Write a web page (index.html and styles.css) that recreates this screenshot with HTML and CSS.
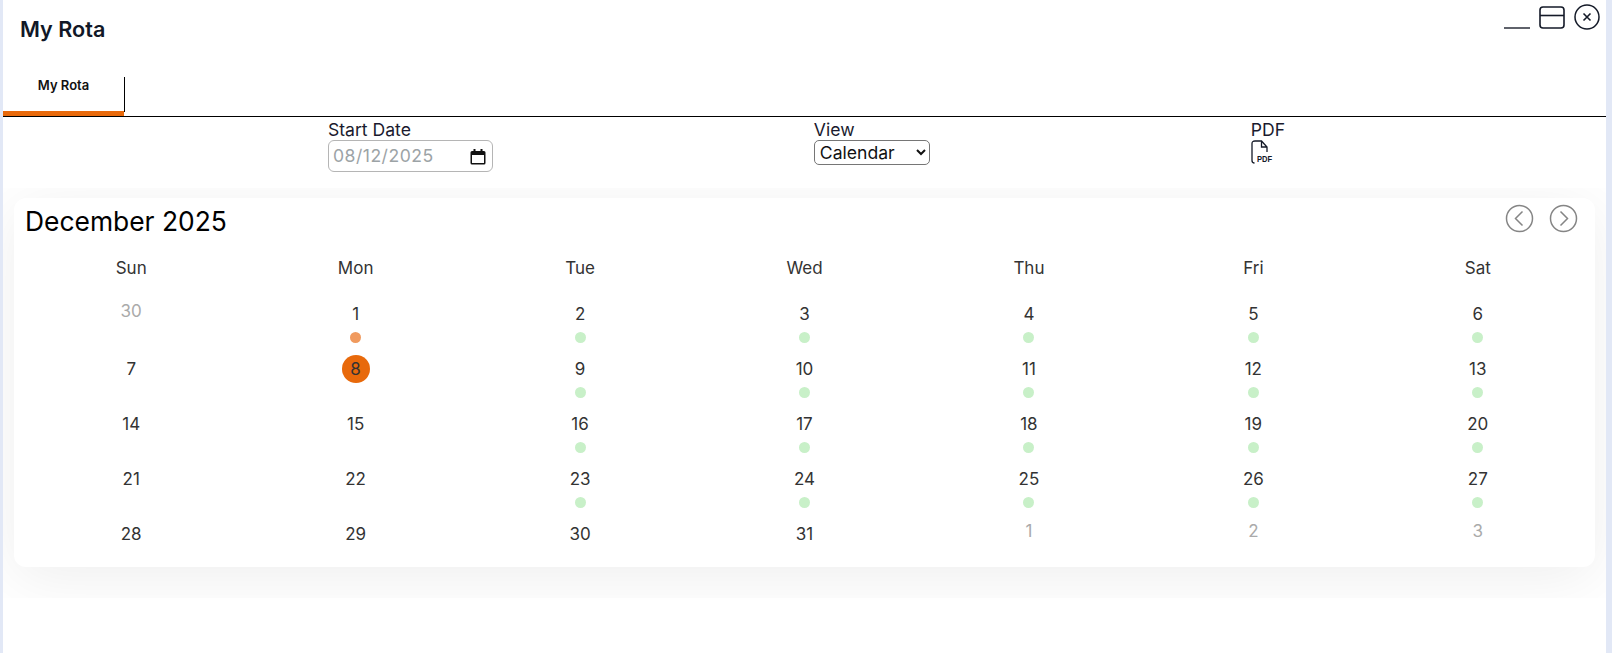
FILE: index.html
```html
<!DOCTYPE html>
<html lang="en">
<head>
<meta charset="utf-8">
<title>My Rota</title>
<link rel="stylesheet" href="styles.css">
</head>
<body>
<div class="window">
  <header class="titlebar">
    <h1 class="title">My Rota</h1>
    <div class="controls">
      <svg class="ctl-min" width="26" height="25" viewBox="0 0 26 25"><path d="M0 24h26" stroke="#2a2e3a" stroke-width="1.500"/></svg>
      <svg class="ctl-max" width="26" height="23" viewBox="0 0 26 23" fill="none" stroke="#141a28" stroke-width="1.6"><rect x="1" y="1" width="24" height="21" rx="3"/><path d="M1 9.500h24"/></svg>
      <svg class="ctl-close" width="26" height="26" viewBox="0 0 26 26" fill="none" stroke="#141a28"><circle cx="13" cy="13" r="12" stroke-width="1.500"/><path d="M9.500 9.500l7 7M16.500 9.500l-7 7" stroke-width="1.600"/></svg>
    </div>
  </header>
  <nav class="tabs">
    <div class="tab">My Rota</div>
    <div class="tab-sep"></div>
  </nav>
  <section class="filters">
    <div class="field">
      <span class="label">Start Date</span>
      <div class="date-input">
        <span class="date-value">08/12/2025</span>
        <svg width="16" height="17" viewBox="0 0 16 17"><path d="M2 3h12a1.500 1.500 0 0 1 1.500 1.500V15a1.500 1.500 0 0 1-1.500 1.500H2A1.500 1.500 0 0 1 .5 15V4.500A1.500 1.500 0 0 1 2 3zM2 7V15H14V7z" fill="#111" fill-rule="evenodd"/><path d="M3.500 1h2v3h-2zM10.500 1h2v3h-2z" fill="#111"/></svg>
      </div>
    </div>
    <div class="field">
      <span class="label">View</span>
      <select class="view-select"><option>Calendar</option></select>
    </div>
    <div class="field field-pdf">
      <span class="label">PDF</span>
      <div class="pdf-icon">
        <svg width="24" height="24" viewBox="0 0 24 24" fill="none" stroke="#141a28" stroke-width="1.300"><path d="M4 1h6.500l5.500 6v5M10.500 1v6h5.500M4 1Q1 1 1 3.500V20.500Q1 23 3.500 23"/></svg>
        <span class="pdf-text">PDF</span>
      </div>
    </div>
  </section>
  <div class="cal-clip">
    <section class="calendar">
      <div class="cal-head">
        <h2 class="month">December 2025</h2>
        <div class="cal-nav">
          <svg width="29" height="29" viewBox="0 0 29 29" fill="none" stroke="#858585" stroke-width="1.500"><circle cx="14.500" cy="14.500" r="13"/><path d="M17.500 7.500l-7 7 7 7"/></svg>
          <svg width="29" height="29" viewBox="0 0 29 29" fill="none" stroke="#858585" stroke-width="1.500"><circle cx="14.500" cy="14.500" r="13"/><path d="M11.500 7.500l7 7-7 7"/></svg>
        </div>
      </div>
      <div class="grid">
        <div class="dow">Sun</div><div class="dow">Mon</div><div class="dow">Tue</div><div class="dow">Wed</div><div class="dow">Thu</div><div class="dow">Fri</div><div class="dow">Sat</div>

        <div class="day other">30</div>
        <div class="day"><span class="num">1</span><i class="dot orange"></i></div>
        <div class="day"><span class="num">2</span><i class="dot"></i></div>
        <div class="day"><span class="num">3</span><i class="dot"></i></div>
        <div class="day"><span class="num">4</span><i class="dot"></i></div>
        <div class="day"><span class="num">5</span><i class="dot"></i></div>
        <div class="day"><span class="num">6</span><i class="dot"></i></div>

        <div class="day"><span class="num">7</span></div>
        <div class="day"><span class="num today">8</span></div>
        <div class="day"><span class="num">9</span><i class="dot"></i></div>
        <div class="day"><span class="num">10</span><i class="dot"></i></div>
        <div class="day"><span class="num">11</span><i class="dot"></i></div>
        <div class="day"><span class="num">12</span><i class="dot"></i></div>
        <div class="day"><span class="num">13</span><i class="dot"></i></div>

        <div class="day"><span class="num">14</span></div>
        <div class="day"><span class="num">15</span></div>
        <div class="day"><span class="num">16</span><i class="dot"></i></div>
        <div class="day"><span class="num">17</span><i class="dot"></i></div>
        <div class="day"><span class="num">18</span><i class="dot"></i></div>
        <div class="day"><span class="num">19</span><i class="dot"></i></div>
        <div class="day"><span class="num">20</span><i class="dot"></i></div>

        <div class="day"><span class="num">21</span></div>
        <div class="day"><span class="num">22</span></div>
        <div class="day"><span class="num">23</span><i class="dot"></i></div>
        <div class="day"><span class="num">24</span><i class="dot"></i></div>
        <div class="day"><span class="num">25</span><i class="dot"></i></div>
        <div class="day"><span class="num">26</span><i class="dot"></i></div>
        <div class="day"><span class="num">27</span><i class="dot"></i></div>

        <div class="day"><span class="num">28</span></div>
        <div class="day"><span class="num">29</span></div>
        <div class="day"><span class="num">30</span></div>
        <div class="day"><span class="num">31</span></div>
        <div class="day other">1</div>
        <div class="day other">2</div>
        <div class="day other">3</div>
      </div>
    </section>
  </div>
</div>
</body>
</html>
```
FILE: styles.css
```css
* { box-sizing: border-box; }
html, body { margin: 0; height: 100%; }
body {
  background: #e2e8f6;
  padding: 0 6px 0 3px;
  font-family: Inter, "Liberation Sans", sans-serif;
  color: #111827;
  overflow: hidden;
}
.window { background: #fff; height: 653px; }
.titlebar {
  height: 77px;
  display: flex;
  justify-content: space-between;
  align-items: flex-start;
  padding: 0 6px 0 17px;
}
.title { margin: 17px 0 0; font-size: 21.600px; line-height: 25px; font-weight: 600; color: #111827; }
.controls { display: flex; align-items: flex-start; gap: 9px; padding-top: 4px; }
.ctl-max { margin-top: 2px; }
.tabs { border-bottom: 1px solid #000; height: 40px; display: flex; align-items: flex-start; }
.tab {
  width: 121px;
  height: 39px;
  border-bottom: 5px solid #e8690b;
  padding-top: 1px;
  font-size: 13px;
  line-height: 15px;
  font-weight: 600;
  text-align: center;
  color: #111;
}
.tab-sep { width: 1px; height: 35px; background: #000; }
.filters {
  display: flex;
  justify-content: space-evenly;
  padding-left: 4px;
  height: 71px;
}
.field { display: flex; flex-direction: column; align-items: flex-start; }
.label { font-size: 17.600px; line-height: 20px; color: #1a1a2e; margin-top: 3px; height: 20px; }
.date-input {
  width: 165px;
  height: 32px;
  border: 1px solid #b5b5b5;
  border-radius: 6px;
  display: flex;
  align-items: center;
  justify-content: space-between;
  padding: 0 6px 0 4px;
  font-size: 17.600px;
  color: #9ca3a6;
  letter-spacing: 0.500px;
}
.date-value { margin-top: -2px; }
.view-select {
  width: 116px;
  height: 25px;
  font-family: inherit;
  font-size: 17.600px;
  color: #111;
  background: #fff;
  border: 1px solid #767676;
  border-radius: 5px;
  padding: 0 0 0 1px;
}
.pdf-icon { position: relative; width: 24px; height: 24px; }
.pdf-text {
  position: absolute;
  left: 6px;
  top: 14px;
  font-family: "Liberation Sans", sans-serif;
  font-size: 9.700px;
  line-height: 9px;
  font-weight: 700;
  color: #141a28;
  background: #fff;
  transform: scaleX(0.78);
  transform-origin: left center;
}
.cal-clip {
  overflow: hidden;
  height: 410px;
  padding: 10px 11px 0;
}
.calendar {
  height: 369px;
  background: #fff;
  border-radius: 12px;
  box-shadow: 0 10px 60px rgba(0, 0, 0, 0.07);
  padding: 0 5px;
}
.cal-head {
  height: 45px;
  display: flex;
  justify-content: space-between;
  align-items: flex-start;
  padding: 0 12px 0 6px;
}
.month { margin: 8px 0 0; font-size: 26.400px; line-height: 30px; font-weight: 400; color: #000; }
.cal-nav { display: flex; gap: 15px; padding-top: 6px; }
.grid { display: grid; grid-template-columns: repeat(7, 1fr); grid-auto-rows: 55px; grid-template-rows: 53px; }
.dow { font-size: 17px; line-height: 20px; padding-top: 15px; text-align: center; color: #333; }
.day {
  display: flex;
  flex-direction: column;
  align-items: center;
  font-size: 17px;
  color: #333;
  text-align: center;
}
.num {
  width: 28px;
  height: 28px;
  line-height: 28px;
  border-radius: 50%;
  margin-top: 4px;
}
.today { background: #e8690b; }
.other { color: #aaa; line-height: 28px; padding-top: 1px; }
.dot {
  width: 11px;
  height: 11px;
  border-radius: 50%;
  background: #c8f0c8;
  margin-top: 4px;
}
.orange { background: #f09a5e; }
```
